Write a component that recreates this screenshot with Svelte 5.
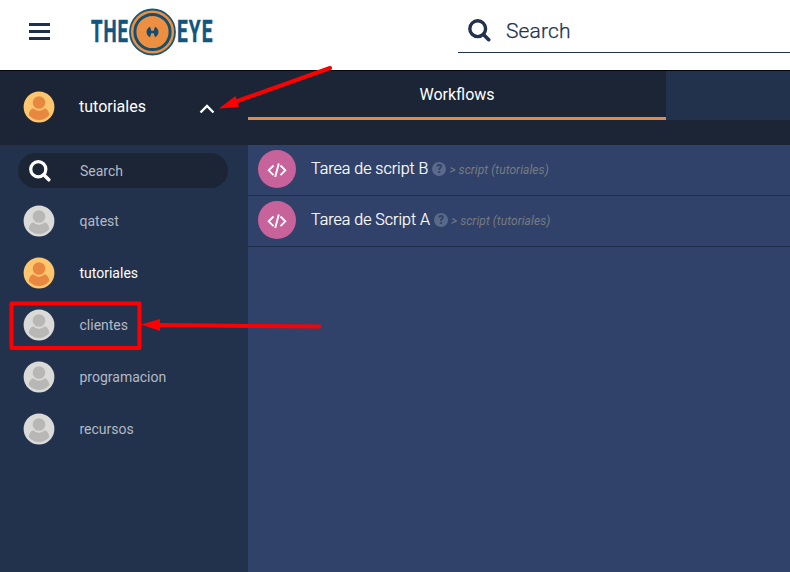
<script>
  const customers = [
    { name: 'qatest' },
    { name: 'tutoriales', active: true },
    { name: 'clientes' },
    { name: 'programacion' },
    { name: 'recursos' },
  ];
  const tasks = ['Tarea de script B', 'Tarea de Script A'];
</script>

{#snippet avatar(active)}
  <svg class="avatar" class:active width="32" height="32" viewBox="0 0 32 32">
    <circle class="disc" cx="16" cy="16" r="15.4" />
    <circle class="person" cx="16" cy="11.5" r="6.3" />
    <path class="person" d="M10.2 17.3C12 19 13.8 19.7 16 19.7s4-.7 5.800-2.400C24.700 18.400 26.300 21 26.200 24.200 23.500 27.300 20 28.900 16 28.900S8.500 27.300 5.800 24.200C5.700 21 7.300 18.400 10.200 17.300z" />
  </svg>
{/snippet}

{#snippet magnifier(size)}
  <svg class="magnifier" width={size} height={size} viewBox="0 0 23 23">
    <circle cx="9.700" cy="9.700" r="7.900" fill="none" stroke="currentColor" stroke-width="3.400" />
    <path d="M15.500 15.500L20.700 20.700" stroke="currentColor" stroke-width="3.600" stroke-linecap="round" />
  </svg>
{/snippet}

<div class="app">
  <header>
    <svg class="burger" width="21" height="18" viewBox="0 0 21 18">
      <path d="M1 1.500H20M1 8.500H20M1 15.500H20" stroke="#202f4b" stroke-width="3" stroke-linecap="square" />
    </svg>
    <svg class="logo" width="128" height="48" viewBox="0 0 128 48">
      <g fill="#115580" stroke="#115580" stroke-width=".5" font-family="Roboto, sans-serif" font-weight="700" font-size="30.500">
        <text transform="translate(1 33.800) scale(.61 1)" letter-spacing="1.500">THE</text>
        <text transform="translate(87 33.800) scale(.625 1)" letter-spacing="1.800">EYE</text>
      </g>
      <circle cx="62.500" cy="24" r="22.500" fill="#ed8f40" stroke="#1b5674" stroke-width="1.800" />
      <circle cx="62.500" cy="24" r="17.600" fill="none" stroke="#174f70" stroke-width="3" />
      <path d="M60 18.800L61.300 22.800H63.700L65 18.800C67.300 20 68.500 21.800 68.500 24S67.300 28 65 29.200L63.700 25.200H61.300L60 29.200C57.700 28 56.500 26.200 56.500 24S57.700 20 60 18.800z" fill="#154b6d" />
    </svg>
    <div class="search">
      {@render magnifier(23)}
      <span>Search</span>
    </div>
  </header>

  <div class="bar">
    <div class="current">
      {@render avatar(true)}
      <span>tutoriales</span>
      <svg class="chevron" width="16" height="10" viewBox="0 0 16 10">
        <path d="M1.500 8.500L8 2L14.500 8.500" fill="none" stroke="#fff" stroke-width="2.300" />
      </svg>
    </div>
    <nav>
      <div class="tab">Workflows</div>
      <div class="rest"></div>
    </nav>
  </div>

  <div class="body">
    <aside>
      <div class="filter">
        {@render magnifier(22)}
        <span>Search</span>
      </div>
      {#each customers as c}
        <div class="customer" class:selected={c.active}>
          {@render avatar(c.active)}
          <span>{c.name}</span>
        </div>
      {/each}
    </aside>
    <main>
      {#each tasks as task}
        <div class="task">
          <svg class="code" width="38" height="38" viewBox="0 0 38 38">
            <circle cx="19" cy="19" r="19" fill="#c8629b" />
            <path d="M15.500 15.500L10.700 20.300L15.500 25.100M22.500 15.500L27.300 20.300L22.500 25.100M20.800 13.500L17.200 27" fill="none" stroke="#fff" stroke-width="1.900" />
          </svg>
          <span class="title">{task}</span>
          <span class="help">?</span>
          <em>&gt; script (tutoriales)</em>
        </div>
      {/each}
    </main>
  </div>

  <svg class="marks" width="790" height="572" viewBox="0 0 790 572">
    <g fill="none" stroke="#f00" stroke-width="4" stroke-linecap="round" stroke-linejoin="round">
      <rect x="11.500" y="303.500" width="128" height="44.500" />
      <path d="M330 68L236 101.500M319.500 326.500L158 325" />
    </g>
    <path d="M219 108.500L235.500 96L239 107zM141 324.500L160 319V331z" fill="#f00" />
  </svg>
</div>

<style>
  :global(body) {
    margin: 0;
  }
  .app {
    position: relative;
    width: 790px;
    height: 572px;
    overflow: hidden;
    display: flex;
    flex-direction: column;
    background: #22314c;
    font-family: Roboto, sans-serif;
  }
  header {
    box-sizing: border-box;
    height: 71px;
    flex: none;
    display: flex;
    align-items: flex-start;
    background: #fff;
    border-bottom: 1px solid #05070b;
    padding-left: 29px;
  }
  .burger {
    margin-top: 23px;
  }
  .logo {
    margin: 8px 0 0 40px;
    overflow: visible;
  }
  .search {
    box-sizing: border-box;
    height: 53px;
    flex: 1;
    margin-left: 240px;
    padding: 19px 0 0 10px;
    border-bottom: 1px solid #22314c;
    display: flex;
    align-items: flex-start;
    color: #22314c;
    font-size: 21px;
    font-weight: 300;
    letter-spacing: .15px;
    line-height: 24px;
    -webkit-text-stroke: .25px #22314c;
  }
  .search span {
    margin-left: 15px;
  }
  .bar {
    height: 74px;
    flex: none;
    display: flex;
    background: #1b2536;
    color: #fff;
    font-size: 16px;
  }
  .current {
    box-sizing: border-box;
    width: 248px;
    height: 71px;
    padding-left: 23px;
    display: flex;
    align-items: center;
  }
  .current span {
    width: 120px;
    margin-left: 24px;
  }
  .chevron {
    margin-top: 4px;
  }
  nav {
    flex: 1;
    height: 49px;
    display: flex;
  }
  .tab {
    box-sizing: border-box;
    width: 418px;
    border-bottom: 3px solid #e88841;
    text-align: center;
    line-height: 48px;
    height: 49px;
  }
  .rest {
    flex: 1;
    background: #22314c;
  }
  .body {
    flex: 1;
    display: flex;
  }
  aside {
    width: 248px;
    color: #b3bac6;
    font-size: 14px;
  }
  .filter {
    box-sizing: border-box;
    width: 210px;
    height: 35px;
    margin: 8px 0 7px 18px;
    padding-left: 11px;
    display: flex;
    align-items: center;
    border-radius: 18px;
    background: #1b2536;
  }
  .filter span {
    margin-left: 29px;
  }
  .filter :global(svg) {
    color: #fff;
  }
  .customer {
    height: 52px;
    padding-left: 23px;
    display: flex;
    align-items: center;
  }
  .customer span {
    margin-left: 24.500px;
  }
  .selected {
    color: #fff;
  }
  .disc {
    fill: #dadad9;
  }
  .person {
    fill: #b8b7b6;
  }
  .active .disc {
    fill: #ffc66e;
  }
  .active .person {
    fill: #e8873f;
  }
  main {
    flex: 1;
    background: #304269;
  }
  .task {
    box-sizing: border-box;
    height: 51px;
    padding: 0 0 2px 10px;
    display: flex;
    align-items: center;
    border-bottom: 1px solid #202e49;
    color: #fff;
    white-space: nowrap;
  }
  .title {
    margin-left: 15px;
    padding-bottom: 2px;
    font-size: 16px;
    font-weight: 300;
    -webkit-text-stroke: .2px #fff;
  }
  .help {
    width: 14px;
    height: 14px;
    margin: 0 3px 1px 4px;
    border-radius: 50%;
    background: #5a6a8b;
    color: #304269;
    font-size: 12px;
    font-weight: 900;
    line-height: 14px;
    text-align: center;
  }
  em {
    padding-top: 1px;
    color: #777b82;
    font-size: 12px;
    letter-spacing: .07px;
  }
  .marks {
    position: absolute;
    left: 0;
    top: 0;
  }
</style>
